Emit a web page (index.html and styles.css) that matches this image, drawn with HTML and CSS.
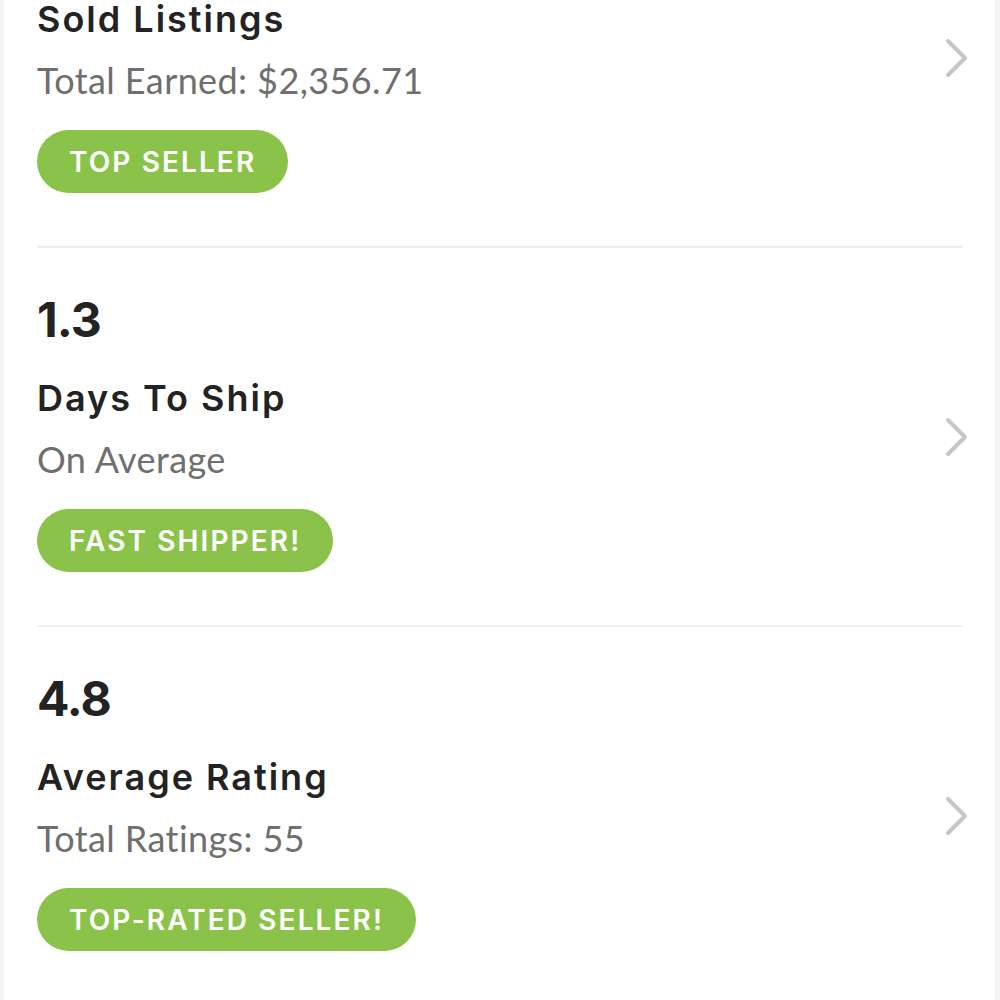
FILE: index.html
```html
<!DOCTYPE html>
<html lang="en">
<head>
    <meta charset="UTF-8">
    <meta name="viewport" content="width=device-width, initial-scale=1.0">
    <title>Seller Stats</title>
    <link rel="stylesheet" href="styles.css">
</head>
<body>
    <div class="page">
        <div class="stats">
            <div class="stat-row">
                <div class="stat-info">
                    <div class="stat-value">112</div>
                    <div class="stat-title">Sold Listings</div>
                    <div class="stat-sub">Total Earned: $2,356.71</div>
                    <span class="badge">TOP SELLER</span>
                </div>
                <svg class="chevron" viewBox="0 0 26 40" width="26" height="40">
                    <polyline points="4,3 21,20 4,37" />
                </svg>
            </div>

            <div class="stat-row">
                <div class="stat-info">
                    <div class="stat-value">1.3</div>
                    <div class="stat-title">Days To Ship</div>
                    <div class="stat-sub">On Average</div>
                    <span class="badge">FAST SHIPPER!</span>
                </div>
                <svg class="chevron" viewBox="0 0 26 40" width="26" height="40">
                    <polyline points="4,3 21,20 4,37" />
                </svg>
            </div>

            <div class="stat-row">
                <div class="stat-info">
                    <div class="stat-value">4.8</div>
                    <div class="stat-title">Average Rating</div>
                    <div class="stat-sub">Total Ratings: 55</div>
                    <span class="badge">TOP-RATED SELLER!</span>
                </div>
                <svg class="chevron" viewBox="0 0 26 40" width="26" height="40">
                    <polyline points="4,3 21,20 4,37" />
                </svg>
            </div>
        </div>
    </div>
</body>
</html>
```

FILE: styles.css
```css
body {
    font-family: Lato, "Open Sans", sans-serif;
    margin: 0;
    background-color: #f3f3f1;
    overflow: hidden;
}

.page {
    margin: 0 5px 0 4px;
    min-height: 1000px;
    background-color: #fff;
    overflow: hidden;
}

/* page is scrolled: first row is cut off at the top */
.stats {
    margin-top: -131px;
    padding: 0 32px 0 33px;
}

.stat-row {
    display: flex;
    align-items: center;
    padding: 44px 0 53px;
    border-bottom: 2px solid #efefed;
}

.stat-info {
    flex: 1;
}

.stat-value {
    font-family: Inter, Lato, sans-serif;
    font-size: 48px;
    line-height: 56px;
    font-weight: 700;
    letter-spacing: -1px;
    color: #232323;
}

.stat-title {
    margin-top: 28px;
    font-family: Inter, Lato, sans-serif;
    font-size: 36px;
    line-height: 44px;
    font-weight: 600;
    letter-spacing: 2px;
    color: #232323;
}

.stat-sub {
    margin-top: 17px;
    font-size: 36px;
    line-height: 44px;
    letter-spacing: 0.4px;
    color: #6f6f6f;
}

.badge {
    display: inline-flex;
    align-items: center;
    height: 63px;
    margin-top: 28px;
    padding: 0 32px;
    border-radius: 32px;
    background-color: #8bc34a;
    color: #fff;
    font-family: Inter, Lato, sans-serif;
    font-size: 28px;
    font-weight: 600;
    letter-spacing: 2.1px;
}

.chevron {
    margin: 10px -7px 0 0;
}

.chevron polyline {
    fill: none;
    stroke: #c6c6c6;
    stroke-width: 4;
    stroke-linecap: round;
    stroke-linejoin: round;
}
```
